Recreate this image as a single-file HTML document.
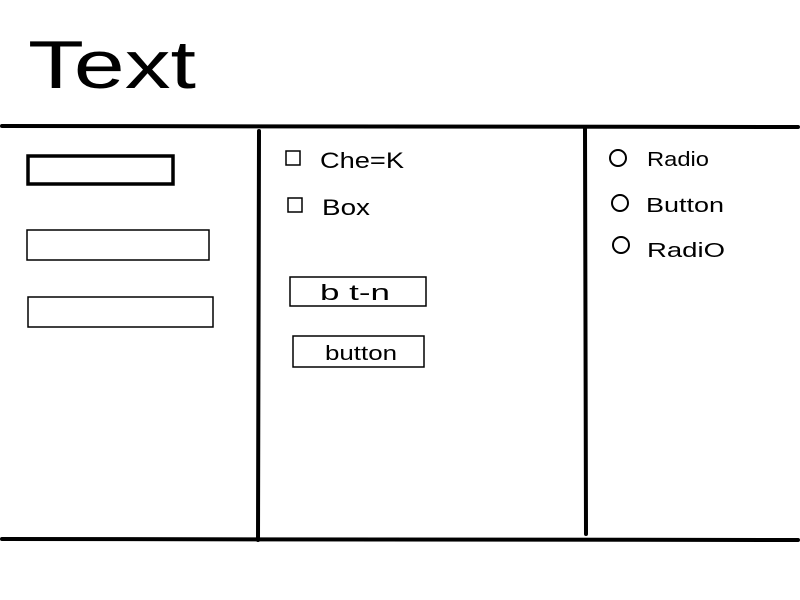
<!DOCTYPE html>
<html><head><meta charset="utf-8"><style>
html,body{margin:0;padding:0;background:#fff;width:800px;height:600px;overflow:hidden}
svg{display:block}
text{font-family:"Liberation Sans",sans-serif;fill:#000}
</style></head><body>
<svg width="800" height="600" viewBox="0 0 800 600" xmlns="http://www.w3.org/2000/svg">
<rect width="800" height="600" fill="#fff"/>
<text x="28" y="88" font-size="68" textLength="168" lengthAdjust="spacingAndGlyphs">Text</text>
<g stroke="#000" fill="none" stroke-linecap="round">
<line x1="2" y1="126" x2="798" y2="127" stroke-width="4"/>
<line x1="2" y1="539" x2="798" y2="540" stroke-width="4"/>
<line x1="259" y1="131" x2="258" y2="540" stroke-width="4"/>
<line x1="585" y1="129" x2="586" y2="534" stroke-width="4"/>
<rect x="28" y="156" width="145" height="28" stroke-width="3.5"/>
<rect x="27" y="230" width="182" height="30" stroke-width="1.5"/>
<rect x="28" y="297" width="185" height="30" stroke-width="1.5"/>
<rect x="286" y="151" width="14" height="14" stroke-width="1.5"/>
<rect x="288" y="198" width="14" height="14" stroke-width="1.5"/>
<rect x="290" y="277" width="136" height="29" stroke-width="1.5"/>
<rect x="293" y="336" width="131" height="31" stroke-width="1.5"/>
<circle cx="618" cy="158" r="8" stroke-width="2"/>
<circle cx="620" cy="203" r="8" stroke-width="2"/>
<circle cx="621" cy="245" r="8" stroke-width="2"/>
</g>
<text x="320" y="168" font-size="22" textLength="84" lengthAdjust="spacingAndGlyphs">Che=K</text>
<text x="322" y="215" font-size="22" textLength="48" lengthAdjust="spacingAndGlyphs">Box</text>
<text x="320" y="300" font-size="22" textLength="70" lengthAdjust="spacingAndGlyphs">b t-n</text>
<text x="325" y="360" font-size="20" textLength="72" lengthAdjust="spacingAndGlyphs">button</text>
<text x="647" y="166" font-size="20" textLength="62" lengthAdjust="spacingAndGlyphs">Radio</text>
<text x="646" y="212" font-size="20" textLength="78" lengthAdjust="spacingAndGlyphs">Button</text>
<text x="647" y="257" font-size="20" textLength="78" lengthAdjust="spacingAndGlyphs">RadiO</text>
</svg>
</body></html>
